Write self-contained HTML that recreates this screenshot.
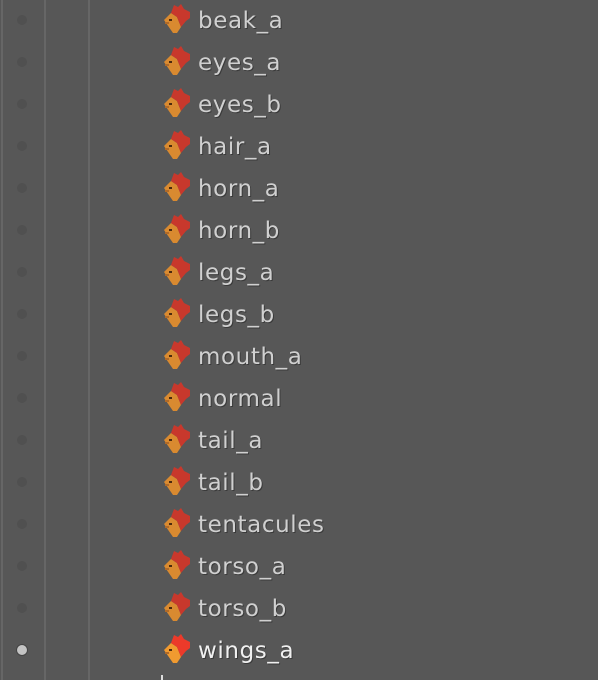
<!DOCTYPE html><html><head><style>
body{margin:0;width:598px;height:680px;background:#575757;position:relative;overflow:hidden;font-family:"DejaVu Sans","Liberation Sans",sans-serif}
.v{position:absolute;top:0;height:680px;width:2px;background:#666}
.r{position:absolute;left:0;height:42px;width:598px}
.d{position:absolute;left:17px;top:16px;width:10px;height:10px;border-radius:50%;background:#505050}
.t{position:absolute;left:198px;top:8px;font-size:23px;letter-spacing:0.6px;color:#d0d0d0;line-height:28px;text-shadow:1px 1px 0 #3a3a3a}
svg{position:absolute;left:163px;top:4px}
</style></head><body>
<div class="v" style="left:1px"></div><div class="v" style="left:44px"></div><div class="v" style="left:88px"></div>
<div id="c"></div>
<div style="position:absolute;left:161px;top:675px;width:2px;height:5px;background:#ddd"></div>
<script>
var n=["beak_a","eyes_a","eyes_b","hair_a","horn_a","horn_b","legs_a","legs_b","mouth_a","normal","tail_a","tail_b","tentacules","torso_a","torso_b","wings_a"];
var h="";n.forEach(function(s,i){var last=i==15;
h+='<div class="r" style="top:'+(i*42-1)+'px"><div class="d"'+(last?' style="background:#c4c4c4;box-shadow:0 0 0 1px #444"':'')+'></div>'+
'<svg width="30" height="32" viewBox="0 0 30 32"><polygon points="1,17 8,10 14,14 18,24 14,30 10,30" fill="'+(last?'#f09a30':'#d98a30')+'"/><polygon points="8,10 11,2 15,4 18,1 21,6 27,9 27,15 23,18 18,24 14,14" fill="'+(last?'#ec3a2a':'#c8382c')+'"/><rect x="6" y="16" width="3" height="2" fill="#4a2a10"/><rect x="2" y="19" width="4" height="2" fill="#b06a28"/></svg>'+
'<div class="t"'+(last?' style="color:#f0f0f0"':'')+'>'+s+'</div></div>';});
document.getElementById("c").innerHTML=h;
</script>
</body></html>
